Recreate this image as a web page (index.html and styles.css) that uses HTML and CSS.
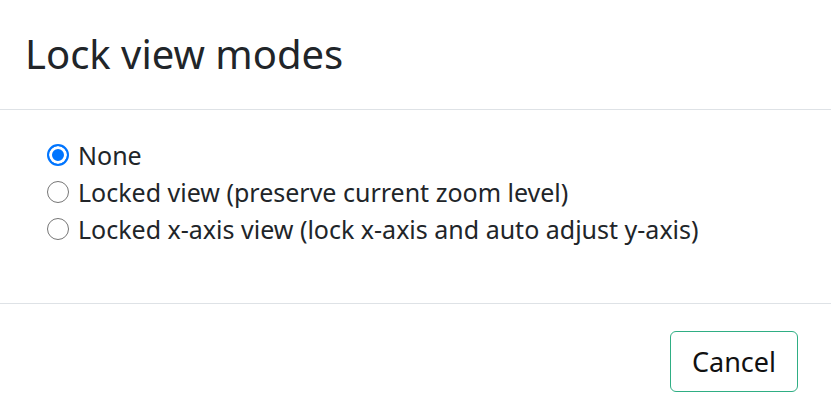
FILE: index.html
```html
<!DOCTYPE html>
<html lang="en">
<head>
<meta charset="utf-8">
<title>Lock view modes</title>
<link rel="stylesheet" href="styles.css">
</head>
<body>
<div class="modal">
  <div class="modal-header">
    <h5 class="modal-title">Lock view modes</h5>
  </div>
  <div class="modal-body">
    <form class="mode-list">
      <label class="mode-option">
        <input class="mode-radio" type="radio" name="lockMode" value="none" checked>
        <span>None</span>
      </label>
      <label class="mode-option">
        <input class="mode-radio" type="radio" name="lockMode" value="locked">
        <span>Locked view (preserve current zoom level)</span>
      </label>
      <label class="mode-option">
        <input class="mode-radio" type="radio" name="lockMode" value="x-axis">
        <span>Locked x-axis view (lock x-axis and auto adjust y-axis)</span>
      </label>
    </form>
  </div>
  <div class="modal-footer">
    <button class="btn-cancel" type="button">Cancel</button>
  </div>
</div>
</body>
</html>
```

FILE: styles.css
```css
* {
  box-sizing: border-box;
}

html,
body {
  margin: 0;
  padding: 0;
  background: #fff;
}

body {
  font-family: "Noto Sans", "Open Sans", sans-serif;
  color: #212529;
}

.modal {
  width: 831px;
  height: 416px;
  display: flex;
  flex-direction: column;
  overflow: hidden;
}

.modal-header {
  height: 110px;
  padding: 0 25px;
  display: flex;
  align-items: center;
  border-bottom: 1px solid #dee2e6;
  flex: none;
}

.modal-title {
  margin: 0;
  font-size: 40px;
  font-weight: 400;
  line-height: 1.2;
  padding-bottom: 2px;
}

.modal-body {
  height: 194px;
  flex: none;
  padding: 26px 24px 0 47px;
  border-bottom: 1px solid #dee2e6;
}

.mode-list {
  display: flex;
  flex-direction: column;
  margin: 0;
}

.mode-option {
  display: flex;
  align-items: center;
  gap: 9px;
  height: 37px;
  font-size: 25px;
  cursor: pointer;
}

.mode-radio {
  appearance: none;
  margin: 0;
  width: 22px;
  height: 22px;
  border-radius: 50%;
  border: 1.5px solid #767676;
  background: #fff;
  flex: none;
}

.mode-radio:checked {
  border: 2.5px solid #0075ff;
  background: #0075ff;
  box-shadow: inset 0 0 0 3px #fff;
}

.modal-footer {
  flex: 1;
  display: flex;
  justify-content: flex-end;
  align-items: flex-start;
  padding: 27px 33px 0 0;
}

.btn-cancel {
  width: 128px;
  height: 61px;
  font-family: inherit;
  font-size: 27px;
  color: #111;
  background: #fff;
  border: 1px solid #2fae84;
  border-radius: 6px;
  cursor: pointer;
}
```
